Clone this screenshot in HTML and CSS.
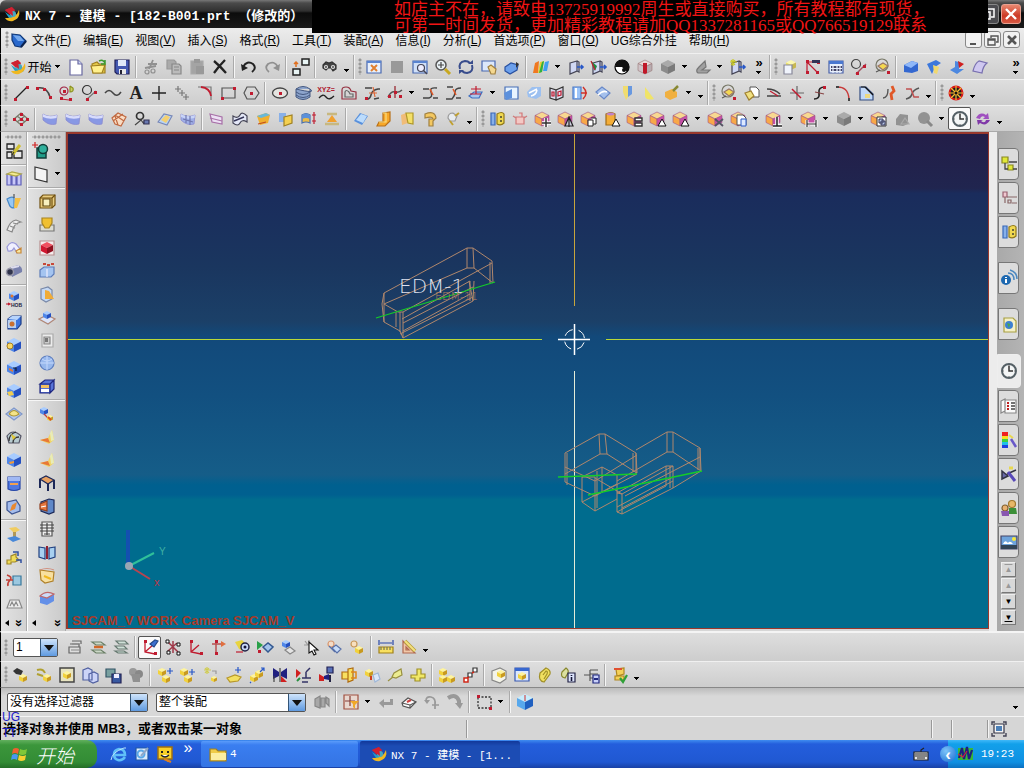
FILE: index.html
```html
<!DOCTYPE html>
<html lang="zh-CN">
<head>
  <meta charset="UTF-8">
  <title>NX 7 - 建模</title>
  <link rel="stylesheet" href="styles.css">
</head>
<body>
  <header class="titlebar">
    <span data-icon="nx"></span>
    <h1>NX 7 - 建模 - [182-B001.prt （修改的）</h1>
    <div class="window_btns">
      <button class="win_restore" aria-label="还原"><svg width="14" height="14" viewBox="0 0 14 14"><path d="M4 2h8v8H9M1 5h7v7H1z" fill="none" stroke="#fff" stroke-width="1.5"/></svg></button>
      <button class="win_close" aria-label="关闭"><svg width="14" height="14" viewBox="0 0 14 14"><path d="M2 2l10 10M12 2L2 12" stroke="#fff" stroke-width="2.4"/></svg></button>
    </div>
  </header>
  <div class="banner">
    <p>如店主不在，请致电13725919992周生或直接购买，所有教程都有现货，</p>
    <p>可第一时间发货，更加精彩教程请加QQ1337281165或QQ766519129联系</p>
  </div>

  <nav class="menubar">
    <i class="grip"></i>
    <span data-icon="part"></span>
    <button>文件(<u>F</u>)</button>
    <button>编辑(<u>E</u>)</button>
    <button>视图(<u>V</u>)</button>
    <button>插入(<u>S</u>)</button>
    <button>格式(<u>R</u>)</button>
    <button>工具(<u>T</u>)</button>
    <button>装配(<u>A</u>)</button>
    <button>信息(<u>I</u>)</button>
    <button>分析(<u>L</u>)</button>
    <button>首选项(<u>P</u>)</button>
    <button>窗口(<u>O</u>)</button>
    <button>UG综合外挂</button>
    <button>帮助(<u>H</u>)</button>
    <div class="doc_btns">
      <button aria-label="最小化"><svg width="12" height="12" viewBox="0 0 12 12"><path d="M2 10h6" stroke="#555" stroke-width="2"/></svg></button>
      <button aria-label="还原文档"><svg width="12" height="12" viewBox="0 0 12 12"><path d="M4 4V2h7v6H9M1 5h7v6H1zM1 6h7" fill="none" stroke="#555" stroke-width="1.4"/></svg></button>
      <button aria-label="关闭文档"><svg width="12" height="12" viewBox="0 0 12 12"><path d="M2 2l8 8M10 2l-8 8" stroke="#555" stroke-width="2.6"/></svg></button>
    </div>
  </nav>

  <div class="toolbar">
    <i class="grip"></i>
    <button class="start_menu"><span data-icon="nx"></span><span class="start_label">开始</span><i class="arrow"></i></button>
    <div class="tools" data-tools="new open save | cut copy paste del | undo redo | swap | find ov / fit gray zoombox zoom rotate pan persp | colors v wall wallgreen sphere redcube graycube v grayshape v wallstar"></div>
    <button class="more" aria-label="更多">»<i class="arrow"></i></button>
    <div class="tools" data-tools="/ boxdoc dims grid circline circgold | bluebox bluecone bluearm violet"></div>
    <button class="more last" aria-label="更多选项">»<i class="arrow"></i></button>
  </div>
  <div class="toolbar">
    <i class="grip"></i>
    <div class="tools" data-tools="line arc arccirc circtan curve text plus points fillet rect hexagon | ellipse helix xyz offset bridge project v join joint section v extract wrapc frame cylred sheet coneblue coneyel paint v ov / circgold docgold trim cross spline corner chamfer stretch smooth ov / wheel ov"></div>
  </div>
  <div class="toolbar">
    <i class="grip"></i>
    <div class="tools" data-tools="mesh | surf surf surf meshor circsurf surfyel surfgrid | surfpink wave boxor twobox flange ruled | slab bend fold hook knob ov / gauge robot cubeplus cubetree cubecopy cyltri cubelist cubetri cubetri v cubex cubepages v cubeperp v cubedim v graycube v cubegroup graytri grayzoom v clock! refresh ov"></div>
  </div>

  <main class="workspace">
    <aside class="dock">
      <i class="grip wide"></i>
      <div class="tools column" data-tools="sketch | extrude revolve sweep swept tube | hole boss pocket bosst padb emboss shell slot groove rib | tbolt steps hinge tray"></div>
      <div class="dock_more"><i class="left"></i><span>»</span></div>
    </aside>
    <aside class="dock second">
      <i class="grip wide"></i>
      <div class="tools column" data-tools="unite+v datum+v | frameor punch redbox split trimbody patch thick ball fillcube | instance wedge wedge table2 cabinet list book sack bluetop"></div>
      <div class="dock_more"><i class="left"></i><span>»</span></div>
    </aside>

    <section class="viewport">
      <svg class="scene" aria-label="图形窗口">
        <!-- full screen crosshair -->
        <path d="M0 205.5h474M538 205.5h2000" stroke="#b8d838"/>
        <path d="M506.500 0v172" stroke="#c8a53c"/>
        <path d="M506.500 237v600" stroke="#e4ecd8"/>
        <!-- EDM-1 block -->
        <g class="wire">
          <path d="M316 159L399 114h6l19 13 1 22-19-15h-7L316 170M399 114v20M405 114l1 20M316 159l-2 11 2 18 16 9M316 159v29M316 170l14 8h5L424 129M335 178v26M332 178v20M328 178v15M335 204l70-37 1-20M402 147v20M405 167l-4-20M335 197l67-37M332 200l73-37M334 185l68-38M335 189l70-36M422 128v21M332 197l3 7"/>
        </g>
        <path class="axis" d="M308 184L427 148"/>
        <text x="331" y="159" class="label">EDM-1</text>
        <text x="367" y="166" class="label small">EDM-11</text>
        <!-- lower pair -->
        <g class="wire">
          <path d="M497 319l34-19h6l31 19 1 20-30-19h-7l-35 20M531 300l1 20M537 300l2 20M497 319v29l30 14M499 319v32M568 319v21M565 319v19M497 333l30 14 42-26M527 362l42-22M514 343v25l13 9V343l-13 0 20-10 15 8v37l5 2 0-20-5-3-22-13M527 377l22-12M514 368l35-18M534 333v25M529 337v37M549 359l5 1 51-28h-7l-49 27M554 380l51-26v-22M549 378l49-26v-20M602 332v22M549 373l56-30M557 362l75-39M554 374l51-27M568 316l31-18h6l27 16 1 23-28-19h-6l-50 29M599 298v20M605 298v20M632 314v22M630 314v22M605 354l28-17"/>
        </g>
        <path class="axis" d="M490 343l79-3M520 361l114-24"/>
        <!-- pointer -->
        <g fill="none" stroke="#fff">
          <path d="M490 205.500h32M506.500 190v31" stroke-width="1.500"/>
          <circle cx="506.500" cy="205.500" r="10" stroke-dasharray="10 6" stroke-dashoffset="-3"/>
        </g>
        <!-- view triad -->
        <path d="M60 396v34" stroke="#1450b0" stroke-width="4"/>
        <path d="M61 432l25-13" stroke="#2fc09a" stroke-width="2"/>
        <path d="M61 432l21 13" stroke="#b84450" stroke-width="2"/>
        <circle cx="61" cy="432" r="4" fill="#9aa6b4"/>
        <text x="91" y="421" class="triad_y">Y</text>
        <text x="86" y="452" class="triad_x">x</text>
        <text x="4" y="491" class="camera">SJCAM_V WORK Camera SJCAM_V</text>
      </svg>
    </section>

    <aside class="resource">
      <button aria-label="装配导航器"><span data-icon="tree"></span></button>
      <button aria-label="约束导航器"><span data-icon="treepink"></span></button>
      <button aria-label="部件导航器"><span data-icon="gauge"></span></button>
      <button class="spaced" aria-label="信息"><span data-icon="info"></span></button>
      <button class="spaced" aria-label="浏览器"><span data-icon="webdoc"></span></button>
      <button class="spaced active" aria-label="历史记录"><span data-icon="clock"></span></button>
      <button aria-label="系统材料"><span data-icon="legend"></span></button>
      <button aria-label="可视化"><span data-icon="spectrum"></span></button>
      <button aria-label="工艺向导"><span data-icon="tools"></span></button>
      <button aria-label="角色"><span data-icon="people"></span></button>
      <button aria-label="场景"><span data-icon="scenepic"></span></button>
      <div class="scrolls">
        <button class="off" aria-label="顶部">▲</button>
        <button class="off" aria-label="向上">▲</button>
        <button aria-label="向下">▼</button>
        <button aria-label="底部">▼</button>
      </div>
    </aside>
  </main>

  <div class="toolbar tall">
    <i class="grip"></i>
    <span class="combo layer"><select aria-label="工作图层"><option>1</option></select></span>
    <div class="tools" data-tools="layers layersor layersgr | wcs! wcspts axes axesor wcseye playsq cubesq pointer chain chainyel | ruler protract ov"></div>
  </div>
  <div class="toolbar">
    <i class="grip"></i>
    <div class="tools" data-tools="findyel yelarrow yelframe assy assysave graysave | addcomp addcomp2 newcomp addlong movecomp mirror constrain savecomp clip pair hand yelplus | yelset links | boxlink boxwin paper paperinfo tree2 | update ov"></div>
  </div>
  <div class="toolbar selection">
    <span class="combo filter"><select aria-label="选择过滤器"><option>没有选择过滤器</option></select></span>
    <span class="combo scope"><select aria-label="选择范围"><option>整个装配</option></select></span>
    <div class="tools" data-tools="graysel | snap v grayback eraser grayundo grayredo | marquee v | glasscube"></div>
    <i class="arrow end"></i>
  </div>

  <footer class="status">
    <p class="cue">选择对象并使用 MB3，或者双击某一对象</p>
    <span class="ug">UG</span><span class="ug low">TT</span>
    <i class="cell message"></i><i class="cell"></i><i class="cell"></i>
    <div class="cell full"><span data-icon="fullscreen"></span></div>
  </footer>

  <nav class="taskbar">
    <button class="start"><span data-icon="windows"></span>开始</button>
    <div class="tools quick" data-tools="ie edit smiley"></div>
    <span class="chevron">»</span>
    <button class="task"><span data-icon="folder"></span>4</button>
    <button class="task current"><span data-icon="nx"></span>NX 7 - 建模 - [1...</button>
    <span class="keyboard" data-icon="keyboard"></span>
    <div class="tray">
      <button class="tray_btn" aria-label="显示隐藏图标">‹</button>
      <span data-icon="wavebox"></span>
      <time>19:23</time>
    </div>
  </nav>
  <script src="icons.js"></script>
</body>
</html>
```
FILE: styles.css
```css
* {
  box-sizing: border-box;
}
body {
  margin: 0;
  min-height: 100vh;
  display: flex;
  flex-direction: column;
  position: relative;
  background-color: #d6d6d6;
  color: #000;
  font-family: "Liberation Sans", "Noto Sans CJK SC", sans-serif;
  font-size: 12px;
  overflow: hidden;
}
button {
  font: inherit;
  color: inherit;
  background: none;
  border: 0;
  padding: 0;
  display: flex;
  align-items: center;
  justify-content: center;
}
p, h1 {
  margin: 0;
}
svg {
  display: block;
}

/* title */
.titlebar {
  height: 28px;
  display: flex;
  align-items: center;
  padding-left: 3px;
  background: linear-gradient(#777 0, #4a4a4a 3px, #303030 11px, #0c0c0c 13px, #1a1a1a 100%);
  border-radius: 6px 0 0 0;
}
.titlebar h1 {
  margin-left: 4px;
  color: #fff;
  font: bold 13px "Liberation Mono", "Noto Sans CJK SC", monospace;
  white-space: nowrap;
}
.window_btns {
  display: flex;
  gap: 2px;
  margin-left: auto;
  padding-right: 3px;
}
.window_btns button {
  width: 20px;
  height: 20px;
  border: 1px solid #888;
  border-radius: 3px;
  background: #4c4c50;
}
.window_btns .win_close {
  border-color: #e8a090;
  background: linear-gradient(#e88870, #cc3a26 60%, #d85a44);
}
.banner {
  position: absolute;
  top: 0;
  left: 312px;
  right: 36px;
  height: 33px;
  padding: 2px 0 0 82px;
  background: #000;
  color: #f01414;
  font: 17px/16px "Liberation Serif", "Noto Sans CJK SC", serif;
  white-space: nowrap;
}

/* menus */
.menubar {
  height: 25px;
  display: flex;
  align-items: center;
  padding: 0 4px 2px 3px;
  border-left: 1px solid #000;
  background: linear-gradient(#ececec, #dcdcdc);
}
.menubar > button {
  margin-left: 12px;
  white-space: nowrap;
}
.menubar > span + button {
  margin-left: 4px;
}
.doc_btns {
  display: flex;
  gap: 2px;
  margin-left: auto;
}
.doc_btns button {
  width: 17px;
  height: 17px;
  border: 1px solid #888;
  border-radius: 3px;
  background: #f2f2f2;
}

/* toolbars */
.toolbar {
  height: 26px;
  display: flex;
  align-items: center;
  padding-left: 2px;
  border-left: 1px solid #000;
  border-top: 1px solid #f0f0f0;
  background: linear-gradient(#dedede, #cdcdcd);
}
.toolbar.tall {
  height: 30px;
  border-top: 2px solid #f4f4f4;
}
.toolbar.selection {
  height: 29px;
  padding-left: 6px;
  border-top: 1px solid #888;
  background: linear-gradient(#bcbcbc, #d8d8d8 8px, #d8d8d8);
}
.grip {
  flex: none;
  width: 6px;
  height: 17px;
  background: radial-gradient(circle at 2px 2px, #999 1px, transparent 2px) 1px 0 / 4px 4px repeat-y;
}
.grip.wide {
  width: auto;
  height: 4px;
  margin: 3px 4px 0;
  background-repeat: repeat-x;
}
.tools {
  flex: none;
  display: flex;
  align-items: center;
}
.tool {
  flex: none;
  width: 23px;
  height: 23px;
}
.tool.pressed {
  border: 1px solid #555;
  border-radius: 2px;
  background: #fafafa;
}
.sep {
  flex: none;
  width: 6px;
  height: 22px;
  background: linear-gradient(90deg, transparent 2px, #aaa 2px, #aaa 3px, #f6f6f6 3px, #f6f6f6 4px, transparent 4px);
}
.break {
  flex: none;
  display: flex;
  align-items: center;
  width: 9px;
  height: 24px;
  padding-left: 3px;
  border-left: 1px solid #aaa;
  box-shadow: inset 1px 0 #f4f4f4;
}
.arrow {
  flex: none;
  width: 12px;
  height: 12px;
  background: linear-gradient(#000, #000) 3px 4px / 5px 1px no-repeat, linear-gradient(#000, #000) 4px 5px / 3px 1px no-repeat, linear-gradient(#000, #000) 5px 6px / 1px 1px no-repeat;
}
.arrow.low {
  margin-top: 8px;
}
.arrow.end {
  margin: 12px 2px 0 auto;
}
.start_menu .start_label {
  width: 25px;
}
.more {
  width: 20px;
  flex-direction: column;
  font: bold 13px/9px "Liberation Sans", sans-serif;
}
.more.last {
  width: 16px;
  margin-left: auto;
}
.more .arrow {
  height: 9px;
}

/* combo boxes */
.combo {
  position: relative;
  flex: none;
}
.combo select {
  display: block;
  width: 100%;
  height: 19px;
  padding: 0 2px;
  appearance: none;
  border: 1px solid #555;
  border-radius: 2px;
  background: #fff;
  color: #000;
  font: 12px "Liberation Sans", "Noto Sans CJK SC", sans-serif;
}
.combo::after {
  content: "";
  position: absolute;
  top: 1px;
  right: 1px;
  width: 16px;
  height: 17px;
  border-left: 1px solid #357;
  background: linear-gradient(#cfe4fb, #5f9ae0);
  pointer-events: none;
}
.combo::before {
  content: "";
  position: absolute;
  z-index: 1;
  top: 7px;
  right: 4px;
  border: 5px solid transparent;
  border-top: 6px solid #111;
  border-bottom: 0;
  pointer-events: none;
}
.layer {
  width: 45px;
  margin: 0 5px 0 4px;
}
.filter {
  width: 141px;
}
.scope {
  width: 150px;
  margin: 0 4px 0 8px;
}

/* work area */
.workspace {
  flex: 1;
  display: flex;
  border-left: 1px solid #000;
  border-top: 1px solid #aaa;
}
.dock {
  width: 26px;
  flex: none;
  display: flex;
  flex-direction: column;
  border-right: 1px solid #aaa;
  background: linear-gradient(90deg, #e2e2e2, #d2d2d2);
}
.dock.second {
  width: 39px;
  border-left: 1px solid #fff;
  background: linear-gradient(90deg, #e2e2e2, #cacaca);
}
.column {
  flex-direction: column;
}
.column .sep {
  width: 100%;
  height: 5px;
  background: linear-gradient(transparent 2px, #aaa 2px, #aaa 3px, #f6f6f6 3px, #f6f6f6 4px, transparent 4px);
}
.column .pair {
  display: flex;
  align-items: center;
}
.dock_more {
  display: flex;
  align-items: center;
  justify-content: space-between;
  margin-top: auto;
  padding: 0 4px 2px;
  height: 15px;
}
.dock_more .left {
  border: 3px solid transparent;
  border-right: 4px solid #000;
  border-left: 0;
}
.dock_more span {
  font: bold 13px/10px "Liberation Sans", sans-serif;
  transform: rotate(90deg);
}
.viewport {
  flex: 1;
  min-width: 0;
  position: relative;
  margin-bottom: 2px;
  border: 2px solid #98382c;
  border-width: 2px 1px 1px 2px;
  background: linear-gradient(#231e48 0, #20254f 11%, #1a2c5c 12%, #1a365f 27%, #1b4068 38%, #12497a 41%, #125080 53%, #155d88 69%, #00608f 71%, #006090 73%, #006c8e 74%, #006c8e 100%);
}
.scene {
  position: absolute;
  inset: 0;
  width: 100%;
  height: 100%;
}
.wire {
  fill: none;
  stroke: #b0876c;
}
.axis {
  stroke: #14cc28;
  stroke-width: 1.3;
}
.label {
  font: 200 20px "DejaVu Sans", sans-serif;
  fill: #dfe2f0;
}
.label.small {
  font-size: 11px;
  fill: #b8805c;
}
.triad_y {
  font-size: 10px;
  fill: #3fb0a4;
}
.triad_x {
  font-size: 11px;
  fill: #b83848;
}
.camera {
  font: bold 13px "Liberation Sans", sans-serif;
  fill: #a83a28;
}

/* resource bar */
.resource {
  width: 35px;
  flex: none;
  display: flex;
  flex-direction: column;
  gap: 2px;
  padding: 16px 5px 0 9px;
  background: linear-gradient(90deg, #ececec 8px, #a9a9a9 8px, #b4b4b4);
}
.resource > button {
  height: 32px;
  border: 1px solid #777;
  border-radius: 0 4px 4px 0;
  background: #dcdcdc;
}
.resource > .spaced {
  margin-top: 12px;
}
.resource > .active {
  margin-left: -1px;
  margin-right: -2px;
  height: 34px;
  border-color: #eee;
  background: #ececec;
}
.scrolls {
  display: flex;
  flex-direction: column;
  align-items: center;
  gap: 1px;
  margin-top: 2px;
}
.scrolls button {
  width: 15px;
  height: 15px;
  border: 1px solid #eee;
  border-right-color: #777;
  border-bottom-color: #777;
  background: #d8d8d8;
  font-size: 8px;
}
.scrolls .off {
  color: #999;
}
.scrolls button:first-child {
  text-decoration: overline;
}
.scrolls button:last-child {
  text-decoration: underline;
}

/* status line */
.status {
  position: relative;
  height: 24px;
  display: flex;
  align-items: center;
  padding-left: 2px;
  border-left: 1px solid #000;
  border-top: 1px solid #f4f4f4;
  background: #d6d6d6;
}
.cue {
  width: 463px;
  font-size: 13px;
  line-height: 16px;
  font-weight: bold;
}
.ug {
  position: absolute;
  top: -7px;
  left: 1px;
  color: #2020c8;
}
.ug.low {
  top: 9px;
}
.cell {
  width: 20px;
  height: 18px;
  border-left: 1px solid #999;
  box-shadow: inset 1px 0 #f4f4f4;
}
.cell.message {
  flex: 1;
}
.cell + .cell + .cell {
  width: 36px;
}
.status .cell.full {
  display: flex;
  align-items: center;
  justify-content: center;
  width: 22px;
  margin-right: 15px;
}

/* taskbar */
.taskbar {
  height: 28px;
  display: flex;
  align-items: center;
  background: linear-gradient(#3f8cf0 0, #245edc 4px, #2058d2 22px, #1941a5);
  color: #fff;
}
.start {
  width: 97px;
  height: 28px;
  gap: 7px;
  padding-right: 12px;
  border-radius: 0 10px 10px 0;
  background: linear-gradient(#62b05e, #3b963b 5px, #338c35 22px, #246e27);
  font: italic 300 19px "Noto Sans CJK SC", sans-serif;
}
.quick {
  margin-left: 10px;
}
.chevron {
  width: 24px;
  text-align: center;
  font-size: 16px;
  margin: -12px 1px 0 0;
}
.task {
  width: 157px;
  height: 26px;
  flex: 0 1 auto;
  justify-content: flex-start;
  gap: 3px;
  padding-left: 8px;
  border-radius: 2px;
  background: linear-gradient(#5a9cfa, #3a7ef0 4px, #3474e4);
  font: 11px "Liberation Mono", "Noto Sans CJK SC", monospace;
}
.task.current {
  width: 160px;
  margin-left: 2px;
  padding-left: 10px;
  background: linear-gradient(#12389a, #1c4cb4 5px, #1c4cb4);
}
.keyboard {
  margin-left: auto;
}
.tray {
  display: flex;
  align-items: center;
  width: 76px;
  height: 28px;
  margin-left: 18px;
  background: linear-gradient(#40b8f8, #12a0ea 4px, #1090e2 22px, #0c70c0);
  font: 11px "Liberation Mono", monospace;
}
.tray_btn {
  flex: none;
  width: 16px;
  height: 16px;
  margin-left: -8px;
  border-radius: 50%;
  background: radial-gradient(circle at 6px 5px, #7cc4fa, #1a6cd0);
  font: bold 17px/13px "Liberation Sans", sans-serif;
}
.tray time {
  margin-left: 7px;
}
```
FILE: icons.js
```javascript
// small drawing helpers, every icon is on an 18 x 18 grid
function p(d, stroke, fill, w) {
  return `<path d="${d}" stroke="${stroke || 'none'}" fill="${fill || 'none'}" stroke-width="${w || 1.2}"/>`;
}
function c(x, y, r, stroke, fill, w) {
  return `<circle cx="${x}" cy="${y}" r="${r}" stroke="${stroke || 'none'}" fill="${fill || 'none'}" stroke-width="${w || 1.2}"/>`;
}
function cube(x, y, s, top, left, right, edge) {
  let h = s / 2;
  return p(`M${x} ${y - s}l${s} ${h}-${s} ${h}-${s}-${h}z`, edge, top, .6) +
    p(`M${x - s} ${y - h}l${s} ${h}v${s}l-${s}-${h}z`, edge, left, .6) +
    p(`M${x + s} ${y - h}l-${s} ${h}v${s}l${s}-${h}z`, edge, right, .6);
}
const K = '#222', R = '#c01c30', B = '#2858c8', Y = '#f0c838', G = '#909090';
const blue = (x = 9, y = 9, s = 7) => cube(x, y, s, '#a8ccff', '#4f86e8', '#2450c0');
const gold = (x = 9, y = 9, s = 5) => cube(x, y, s, '#fff49c', '#f2d23c', '#c89a20');
const hot = cube(8, 9, 7, '#f8d890', '#f8a848', '#c850a8', '#a05088');
const gray = cube(9, 9, 7, '#aaa', '#8c8c8c', '#7a7a7a');
const dots = (list) => list.map(([x, y]) => `<rect x="${x - 1}" y="${y - 1}" width="3" height="3" fill="${R}"/>`).join('');
const sheet = (top, low) => p('M2 4q6 4 14 1l-1 9q-7 2-13-4z', '#8a8ad0', low, .8) + p('M2 4q6 4 14 1l-.5 3Q8 10 2 7z', '', top);
const page = (x, y) => p(`M${x} ${y}h6l3 3v7h-9z`, '#555', '#fff', 1);
const wall = p('M3 5l7-2v10l-7 3zM10 3l2 1v10l-2-1', '#445', '#d0d8f4') + p('M10 9h6m-2-2l2 2-2 2', B, '', 1.6);
const bin = p('M2 7l3-3 3 1 3-1 4 3v4l-3 2-2-3H7l-2 2-3-2z', '#333', '#444') + c(5, 9, 1.500, '#ddd') + c(12, 9, 1.500, '#ddd');
const tinyTri = p('M9 16l4-7 4 7z', '#111', '#fff', 1);
const ax = p('M4 3v11l10 2M4 14l8-7', R, '', 1.300) + dots([[4, 3], [14, 15]]);

const icons = {
  nx: p('M2 5l7-3 3 3-3 7z', '', '#d02030') + p('M2 7l6 9 7-3-3-6-4 4z', '', '#1e9ec8') + p('M5 13q8 0 11-8 2 8-6 11-5 1-8-3', '', '#f0b820') + c(10, 9, 3, '', '#48a8c0') + p('M2 5l7-3 1 9z', '', '#d02030'),
  part: p('M2 3l8 1 6 6-5 6-6-1-3-6z', '#103878', '#2868cc') + p('M3 4l7 1 4 5-6 0z', '', '#74a8ec') + p('M11 16l5-6', '#0c2450', '', 2),
  new: p('M3 2h8l4 4v11H3z', '#6868a0', '#fff') + p('M11 2v4h4', '#6868a0', '#d0d8f8'),
  open: p('M2 6l5-2 2 2h6v9H3z', '#a08020', '#e4c848') + p('M1 8l14-1-3 8H3z', '#a08020', '#fff08c') + p('M9 3q4-2 6 2m0-3v4h-4', '#3c9a30', '', 1.5),
  save: p('M2 2h14v14H4l-2-2z', '#202058', '#4458b0') + p('M5 2h8v6H5z', '', '#e0e8f8') + p('M6 11h7v5H6z', '', '#e8e8e8') + p('M7 12h2v4H7z', '', '#223'),
  cut: p('M11 2l-4 9M6 6h9M3 10l11-2', G, '', 1.800) + c(5, 14, 2, G) + c(11, 13, 2, G),
  copy: p('M2 2h7l2 2v7H2z', '#999', '#aaa') + p('M7 6h7l2 2v8H7z', '#888', '#bbb') + p('M9 9h5M9 12h5', '#888'),
  paste: p('M3 3h12v13H3z', '#aaa', '#a4a4a4') + p('M6 1h6v4H6zM8 8h8v8H8z', '', '#999'),
  del: p('M3 3q6 5 12 12M14 2Q8 8 3 15', K, '', 2.300),
  undo: p('M3 9q4-7 10-3 4 4-1 8', K, '', 2) + p('M1 6l1 7 6-3z', '', K),
  redo: p('M15 9q-4-7-10-3-4 4 1 8', G, '', 1.800) + p('M17 6l-1 7-6-3z', '', G),
  swap: p('M10 1h7v6h-7zM1 11h7v6H1z', K, '#e8f4f4', 1.500) + p('M4 9V4m-2 2l2-2 2 2', '#e07020', '', 1.500),
  find: bin,
  fit: p('M2 3h14v12H2z', '#4868b0', '#e8f0fc') + p('M2 3h14v2H2z', '', '#5a84d0') + p('M6 7l6 6m0-6l-6 6', '#e08030', '', 2),
  gray: p('M3 3h12v12H3z', '', '#999'),
  zoombox: p('M2 3h14v12H2z', '#4868b0', '#d0e0f8') + p('M2 3h14v2H2z', '', '#5a84d0') + c(10, 10, 3.500, '#445', '#eef') + p('M12 12l4 4', '#445', '', 1.500),
  zoom: c(7, 7, 5, '#555', '#e8f0f4', 1.500) + p('M4 7h6M7 4v6', '#444') + p('M11 11l5 5', '#c8a820', '', 3),
  rotate: p('M3 11Q1 4 8 3q3 0 5 2M15 7q2 7-5 8-3 0-5-2', '#384c8c', '', 2) + p('M11 6h5V2zM7 12H2v4z', '', '#384c8c'),
  pan: p('M2 3h13v10H2z', '#4868b0', '#dce8fa') + p('M8 9l3-2 5 4-1 5h-4z', '#a08040', '#f4d890'),
  persp: p('M2 9l6-4 7 2-1 5-7 4-5-3z', '#2850a0', '#6ca0ec') + p('M13 4l3 2-3 4z', '', '#333'),
  colors: p('M1 15L3 5l4-2-1 12z', '', '#f07820') + p('M6 15L8 4l4-1-2 11z', '', '#e8d030') + p('M7 15L10 4l2-1-2 11z', '', '#30b040') + p('M11 13l2-9 4-1-2 10z', '', '#40a0f0'),
  wall: wall,
  wallgreen: wall + p('M1 3l6 5-2 5z', '', '#208c40') + p('M1 3l4 9', R),
  sphere: c(9, 9, 7, '#000', '#fff') + p('M9 2a7 7 0 0 1 5 12L9 9H2a7 7 0 0 1 7-7z', '', '#111') + c(11, 12, 2, '', '#111'),
  redcube: cube(9, 9, 7, '#e8d8d8', '#d0c4c8', '#b8acb0', '#977') + p('M7 5h4v10l-2 1-2-1z', '', '#c01828'),
  graycube: gray,
  grayshape: p('M5 9l6-6 1 6-4 3 8 0-3 3H4q-3-2 1-6z', '#777', '#a0a0a0'),
  wallstar: wall + p('M4 1v7M1 4h7M2 2l4 5M6 2L2 7', '#c8c820', '', 1.200),
  boxdoc: cube(10, 7, 5, '#fcf8b0', '#f0e468', '#c8b850') + p('M3 7h8v9H3z', '#889', '#f0f4fc'),
  dims: p('M3 3v12M3 4h11M3 4l10 10', R) + dots([[3, 3], [14, 4], [3, 14], [13, 14]]) + p('M8 2h8v3H8z', '', '#335'),
  grid: p('M2 3h14v12H2z', '#4860a8', '#e8f0fc') + p('M2 3h14v3H2z', '', '#4a78d0') + p('M4 9h11M4 12h11', '#446', '', 1.8) + p('M6 7v8M10 7v8M13 7v8', '#e8f0fc'),
  circline: c(6, 6, 4.500, '#444') + p('M6 16L16 6', '#a05060', '', 1.5) + dots([[7, 15], [14, 8]]),
  circgold: c(9, 7, 6, '#776') + p('M5 8l5-3 5 3-5 4z', '#976', '#f4d850') + p('M3 14l4-2', '#555') + dots([[15, 14]]),
  bluebox: p('M2 7l8-4 6 2v8l-6 2-8-1z', '', '#3468d0') + p('M2 7l8-4 6 2-7 5z', '', '#90b8f8'),
  bluecone: p('M2 6l9-4 5 3-6 4-3 7z', '', '#3c78dc') + p('M8 7l6 2-2 7-3-1z', '', '#f0d870'),
  bluearm: p('M2 12l5-3V3l4 1v7l5 0-7 5z', '', '#4c88e0') + p('M10 3l6 3-5 4z', '', '#d02020'),
  violet: p('M2 13q2-8 6-10l8 2q-4 3-5 10z', '#7870b0', '#cfc8f0'),
  line: p('M3 15L15 3', K) + dots([[3, 15], [15, 3]]),
  arc: p('M2 4q10-2 13 9', '#444', '', 1.500) + dots([[2, 4], [9, 5], [15, 13]]),
  arccirc: c(6, 7, 4, '#a02040') + p('M3 15l8 1', R) + p('M12 2v6q4 0 3-4l-3-2', '#8a9020', '#c8d060') + dots([[6, 7], [3, 14], [12, 15]]),
  circtan: c(6, 6, 4.500, '#333') + p('M5 16l10-9', '#777') + dots([[6, 15], [14, 8]]),
  curve: p('M1 9q4-5 8 0t8-1', '#444', '', 1.500),
  text: '<text x="9" y="15" text-anchor="middle" font-family="Liberation Serif, serif" font-weight="bold" font-size="18" fill="#222">A</text>',
  plus: p('M9 2v14M2 9h14', K, '', 1.400),
  points: p('M5 2v6M2 5h6M9 6v6M6 9h6M13 10v6M10 13h6', '#777'),
  fillet: p('M2 3h13v13', '#777') + p('M5 3q9 1 10 9', R, '', 1.8),
  rect: p('M3 4h13v10H3z', '#555') + dots([[3, 14], [15, 4]]),
  hexagon: p('M5 3h8l4 6-4 6H5L2 9z', '#555') + dots([[9, 9]]),
  ellipse: '<ellipse cx="9" cy="9" rx="7.500" ry="5" fill="#e4e4e0" stroke="#444" stroke-width="1.300"/>' + dots([[9, 9]]),
  helix: p('M2 5q7-5 14 0t-14 0v8q7 5 14 0V5M2 8q7 5 14 0M2 11q7 5 14 0', '#445880', '#8ca4cc', 1),
  xyz: '<text x="9" y="8" text-anchor="middle" font-family="Liberation Sans, sans-serif" font-weight="bold" font-size="7" fill="#b02030">XYZ=</text>' + p('M2 14q4-5 7-1t8-1', K, '', 1.300),
  offset: p('M2 15V6q0-3 4-3 4 0 5 4l5 1v7z', '#943040') + p('M5 13V8q1-3 4 0l1 2h3v3z', '#666'),
  bridge: p('M2 4h7M2 15q5 1 6-4t7-6h2M11 15l5-1', '#444', '', 1.500) + p('M10 3l2 10M6 9h8', '#e06838', '', 1.200) + dots([[3, 14]]),
  project: p('M2 13q3-6 7-5t7-2', '#555', '', 1.500) + p('M9 2v12', '#a04048', '', 1.500) + dots([[3, 12], [14, 12], [9, 8]]),
  join: p('M2 5h6M2 14h6q4-1 2-6t6-4M12 14h5', '#444', '', 1.400) + p('M9 5l3 6', '#e05828', '', 1.5),
  joint: p('M3 3h6M2 15h6q3-3 3-7t6-4M12 14h5', '#444', '', 1.400) + p('M9 5l3 6', '#e05828', '', 1.5),
  section: p('M2 12l5-4h8l-3 6H5z', '#4070c0', '#a8c8f0') + p('M4 5h10M9 2v8M3 10h11', R),
  extract: p('M3 3h13v12H3z', '#4870b8', '#e8f4ff') + p('M2 9l8-4v9l-6 2z', '', '#5c90dc'),
  wrapc: p('M2 8l5-5h9v9l-5 3-8-2z', '', '#9cc0f0') + p('M4 9l8-4M6 12q5-1 6-6', '#fff', '', 1.500),
  frame: p('M2 4l6 2v10l-6-2zM8 6l7-3v10l-7 3z', '#333', '#dde') + p('M4 8h2v4H4zM10 8l3-1v4l-3 1z', R),
  cylred: p('M2 3h8v12H2z', '#4878c8', '#9cc4f8') + p('M5 4v10', '#fff', '', 2) + p('M12 3q6 6 0 12M10 9h6', '#d03028', '', 1.5),
  sheet: p('M2 8l6-5 8 6-6 6z', '#6888c8', '#a4c0ec') + p('M4 11q5-5 9-3', '#fff', '', 1.600),
  coneblue: p('M6 2h6l1 8-4 6-3-8z', '', '#f0dc70') + p('M11 2h4v8l-4 3z', '', '#6898e0'),
  coneyel: p('M5 3l9 12q-8 2-9-3z', '', '#f0e468'),
  paint: p('M2 8l7-3 5 3v5l-7 3-5-3z', '', '#f0b040') + p('M10 7l5-5', '#883', '', 2.500),
  docgold: page(8, 3) + p('M3 9l6-2 3 5-5 4z', '#a08030', '#f0e080'),
  trim: p('M2 5q8 0 13 5M2 12h14', '#444', '', 1.400) + p('M5 7l8 5', R),
  cross: p('M2 9h14M9 2v14', '#666') + p('M4 5l9 9', R, '', 1.500),
  spline: p('M3 15q6 0 5-6t6-6', K, '', 1.700) + p('M4 8l9 2', '#844') + dots([[13, 3]]),
  corner: p('M2 3q12-1 13 12', '#c83838', '', 1.400) + p('M2 3h3M15 14v3', '#444', '', 2),
  chamfer: p('M3 3h6l7 7v6H3z', '#334c80', '#c0d8f8') + p('M4 3h4l8 8', '#111') + p('M8 10h5v4H8z', '', '#ecd880'),
  stretch: p('M3 14q5 0 5-9', '#555', '', 1.400) + p('M12 2l2 5-3 3 1 6', '#e05828', '', 2.800),
  smooth: p('M3 15q5-1 6-5t7-6', '#555', '', 1.600) + p('M3 5h5l3 8h5', '#c05050', '', 1.500),
  wheel: c(9, 9, 7.500, '', '#d81818') + c(9, 9, 4, '#1c1c20', '#d81818', 3) + p('M9 2v14M2 9h14M4 4l10 10M14 4L4 14', '#f0c030', '', 1.200) + c(9, 9, 1.500, '', '#111'),
  mesh: p('M2 9l7-6 7 6-7 6zM5 6l8 6M13 6l-8 6', '#776') + dots([[2, 9], [9, 4], [15, 9], [9, 14], [9, 9]]),
  surf: sheet('#d8dcfc', '#8898e4'),
  meshor: p('M2 8l6-5 8 4-5 9-6-2zM5 5l9 6M3 11l10-7M8 15L5 6', '#c06840', '#f8dcc4'),
  circsurf: c(7, 6, 3.500, '#333', '', 1.700) + p('M2 15l6-5 3 4M10 12h6', '#444') + p('M11 10h5v4h-5z', '#335', '#6878b0'),
  surfyel: p('M2 12l6-8 8 2-5 9z', '#7888b8', '#b8d4f4') + p('M5 10l5-5 4 2-4 6z', '', '#f4d070'),
  surfgrid: sheet('#c8d4f8', '#a0b0e8') + p('M4 9l10 3M7 5v8M11 6v9', '#7078b0'),
  surfpink: p('M2 4l12 3v7L4 12z', '#a870a8', '#ece0f4') + p('M2 8l12 3', '#a870a8'),
  wave: p('M2 6q5 3 7-1t7 1v6q-5-3-7 1t-7 0z', '#445', '#e4e8f8') + p('M3 11l10-4', '#335', '', 1.500),
  boxor: p('M3 6l9-3 4 2-2 8-8 2z', '', '#f0b030') + p('M3 6l9-3 4 2-9 3z', '', '#68b8d8') + p('M4 14l8-2', '#c04c20'),
  twobox: p('M2 3h7v9H2z', '', '#88b0e8') + p('M7 7l8-2v8l-8 3z', '#a08020', '#f4d050'),
  flange: p('M2 5q4-3 8 0v8q-4-2-8 0z', '#4870b0', '#ecbc48') + p('M2 5q4-3 8 0v4q-4-2-8 0z', '', '#5c90d8') + p('M14 2v12m-2-9h4m-4 6h4', R),
  ruled: p('M4 4h10M2 14h14', '#c8b880', '', 2.500) + p('M9 5l5 7H4z', '', '#f0a030'),
  slab: p('M2 11l6-8 8 3-6 9z', '', '#5890dc') + p('M4 10l5-6 6 2-4 7z', '', '#bcdcfc'),
  bend: p('M8 3l7-1v9l-5 5H2l2-4h4z', '#b87018', '#f8a828') + p('M8 3l3 0v9H4', '#f8dc80'),
  fold: p('M3 5l5-2 2 10-6 2z', '', '#f0bc78') + p('M8 3h7v11l-5-1z', '#b09828', '#f4e068'),
  hook: p('M4 4q10-4 11 4l-3 3v5H8V9h4q0-3-8-1z', '#a08040', '#f4c860'),
  knob: p('M4 8q0-5 5-5l4 3-2 5H6z', '#999', '#e8ecf0') + p('M6 11l3 4M11 6l4-3', '#c0a030', '', 2),
  gauge: p('M3 3h4v12H3z', '#3868b8', '#88b0e8') + p('M9 4q5-3 7 0v9q-3 3-7 1z', '#907818', '#f0d850') + c(13, 7, 1, '', '#443') + c(13, 11, 1, '', '#443'),
  robot: p('M5 7h8v7H5zM2 6l3 2M16 6l-3 2M8 3h3v4', '#d07878', '#f4c8c4'),
  cubeplus: hot + p('M12 8v9M8 13h9', '#fff', '', 3.500) + p('M12 8v9M8 13h9', '#333', '', 1.500),
  cubetree: hot + p('M12 7l-4 9h8zM12 8v9', '#222', '#ccd'),
  cubecopy: hot + p('M8 10h5v6H8zM11 8h5v6h-3', '#222', '#fff', 1),
  cyltri: p('M3 4q5-3 9 0v11H3z', '#a06c18', '#f4ae38') + p('M3 4q5-3 9 0-4 3-9 0', '', '#c080c8') + tinyTri,
  cubelist: hot + p('M9 8h7v3H9zM9 13h7v3H9z', '#333', '#fff', 1.400),
  cubetri: hot + tinyTri,
  cubex: hot + p('M8 9l8 7M16 9l-8 7', '#556', '', 1.800),
  cubepages: hot + page(7, 5) + p('M11 9h5v7h-5z', B, '#dce8ff', 1),
  cubeperp: hot + p('M12 7v9M8 16h9', '#fff', '', 3.500) + p('M12 7v9M8 16h9', '#222', '', 1.500),
  cubedim: hot + p('M7 10v7M16 10v7M7 14h9', '#fff', '', 3) + p('M7 10v7M16 10v7M7 14h9', '#333', '', 1.200),
  cubegroup: hot + p('M7 7h9v9H7z', '#333', '#fff', 1) + p('M9 9h4v4H9zM11 11h4v4h-4z', '#335', '#b8c8e8', 1),
  graytri: p('M3 9l4-5 8 1v9l-5 2-7-1z', '', '#929292') + p('M8 14l4-6 4 6z', '#aaa'),
  grayzoom: c(8, 8, 6, '', '#929292') + p('M11 11l5 5', '#888', '', 3),
  clock: c(9, 9, 7, '#556066', '#f4f6f6', 2) + p('M9 4v5h4', '#333', '', 1.500) + p('M9 3v1M9 14v1M3 9h1M14 9h1', '#777'),
  refresh: p('M2 8q4-7 10-3l2-2 1 6-6 0 2-2q-4-2-5 2z', '', '#a050c0') + p('M16 10q-4 7-10 3l-2 2-1-5h6l-2 1q4 3 5-1z', '', '#8038a8'),
  sketch: p('M2 2h7v5H2zM2 10h5v6H2zM9 9h8v7H9z', K, '#e8e8e8', 1.300) + p('M8 12l7-9', '#d0c030', '', 3) + p('M7 13l2-3', '#333'),
  extrude: p('M2 4h4v11H2zM7 5h4v10H7zM12 4h4v11h-4z', '#6060b8', '#c8c8f8') + p('M2 4l5-2 9 2-5 2z', '#b0a848', '#f4ec90'),
  revolve: p('M2 6q5-3 7-1v10q-4 0-5-4z', '#4888c8', '#98c8f4') + p('M10 5h6l-4 10h-3z', '', '#f4c048') + p('M9 1v4', '#555'),
  sweep: p('M2 14q3-9 9-10l5 2q-7 1-9 10zM5 10l5 2M8 7l5 1', '#888', '#eee'),
  swept: p('M2 8q4-7 9-3l4 5-3 4-3-5q-2 4-6 3z', '#9898d8', '#f0f0ff') + p('M11 12l5-3v5h-4z', '#c88838', '#f8e8a0'),
  tube: p('M4 6l9-3q5 2 4 7l-10 5z', '', '#7880ac') + p('M6 6l8-2', '#dde', '', 2) + c(5, 10, 3.500, '#99a', '#30344c', 1.5),
  hole: blue(9, 6, 5) + c(7, 6, 1.500, '', '#e07830') + p('M1 14h4m-2-1l2 1-2 1', R) + '<text x="6" y="17" font-family="Liberation Sans, sans-serif" font-weight="bold" font-size="5" fill="#224">HOB</text>',
  boss: p('M3 6l4-3h9v8l-4 5H3z', '#1c3c88', '#3c74dc') + p('M3 6l4-3h9l-4 4z', '', '#b8d4fc') + p('M3 7h8v8H3z', '', '#b8d0f0') + c(7, 11, 2.500, '', '#c87030'),
  pocket: blue() + c(5, 10, 3, '#a88020', '#f8d868', 1),
  bosst: blue() + p('M4 9l4 2v2L4 11z', '', '#e07838') + p('M8 9h3v3', '#123'),
  padb: blue() + p('M2 10l5-1 2 4-5 1z', '', '#f0cc50'),
  emboss: p('M1 9l8-6 8 6-8 6z', '#8098c8', '#b4c8f0') + p('M4 9q5-7 10 0-5 4-10 0', '#b09838', '#f4e488'),
  shell: p('M2 8q6-8 14 0l-2 7H4z', '#556', '#b8ccd0') + p('M4 13q0-7 7-9M8 15q0-6 6-6', '#333', '', 1.300) + p('M6 6l5 3-3 3z', '', '#e0c838'),
  slot: blue() + p('M4 11l5-1v2l-4 1z', '', '#f09838'),
  groove: p('M3 3h12v12q-6 3-12 0z', '#2848a8', '#5078e0') + p('M3 3h12v4H3z', '', '#a0b8f4') + p('M5 10h8', '#f0a050', '', 2),
  rib: p('M2 5l9-2 4 6v5l-8 3-5-4z', '#3c5490', '#a4bcec') + p('M5 14l2-6 5-3-2 7z', '', '#e88830'),
  tbolt: p('M4 3l7-1 4 3-6 3z', '', '#f0cc60') + p('M8 7h3v5H8z', '', '#b09858') + p('M2 13l8-2 6 3-8 3z', '', '#4888d8'),
  steps: p('M2 16v-4h4V8l5-2v3l3 3-4 2H6v2z', '#a08828', '#f0dc58') + p('M8 4h5v4M11 12h5v3', '#3050a0', '', 1.500),
  hinge: p('M8 5h8v9H8z', '#38789c', '#9cc8e0') + p('M2 4q6 2 3 5t-2 6M1 9h7', '#c04038', '', 1.600),
  tray: p('M2 14l3-8h9l3 8zM5 12l2-4 2 4 2-4 2 4', '#888', '#ececec'),
  unite: p('M5 6h9v10H5z', '#123c38', '#209c88', 1.500) + c(11, 7, 4.500, '#123c38', '#30b09c', 1.500) + p('M3 0v6M0 3h6', '#d02020'),
  datum: p('M3 2l12 3v12L3 14z', '#333', '#f4f4f4'),
  frameor: p('M2 5l3-3h12v10l-3 3H2z', '#705010', '#e8cc80') + p('M5 6h7v7H5z', '#604810', '#f8f0c0') + p('M2 5h12v10M14 5l3-3', '#705010'),
  punch: p('M2 9h14v6H2z', '#777', '#dcdcd0') + p('M4 2h10v5l-3 5H7L4 7z', '#a88420', '#f0c030'),
  redbox: p('M2 2h14v14H2z', '#b89090', '#f4ecec') + cube(9, 9, 6, '#f05060', '#d01830', '#901020'),
  split: p('M2 8l4-3h10v7l-3 3H2z', '#5c7cb8', '#a4c4f0') + p('M9 7v8', '#eef') + p('M5 2h3M9 3h3M13 2h3', '#c84838', '', 2),
  trimbody: p('M3 4l7-2 4 3v9l-6 3-5-3z', '#7888a8', '#c4d8f4') + p('M7 5l4 1 5 8-9 0z', '', '#f0ac38'),
  patch: p('M1 11l8-4 8 4-7 5z', '#b08878', '#dce4f8') + blue(9, 7, 4),
  thick: p('M4 3h11v13H4z', '#aaa', '#ececec') + p('M6 6h6v7H6z', '#888', '#ccc') + p('M7 7h3v4H7z', '', '#777'),
  ball: c(9, 9, 7, '#6080c0', '#98b8ec') + p('M2 9h14M9 2v14M4 5q5 4 10 0', '#c4d8fc', '', 1),
  fillcube: p('M2 7l5-4h9l-4 4zM2 7h10v9H2zM12 7l4-4v9l-4 4z', '#202880', '#5874d8') + p('M3 8h8v3H3z', '', '#f4c060') + p('M3 12h8v3H3z', '', '#fff'),
  instance: blue(6, 6, 4) + p('M6 9l6 6', '#c04040') + gold(12, 13, 3) + p('M10 12l3 3', '#e05020', '', 2),
  wedge: p('M2 12l8-2 4-8 2 10-5 4z', '', '#f0d468') + p('M2 12l8-2 2 5z', '', '#e87838') + p('M12 5l2-3 2 10-3 1z', '', '#e8ecb8'),
  table2: p('M2 5l6-3 8 4-6 4z', '#1c2858', '#e8a060') + p('M2 5v9M10 10v7M16 6v9', '#1c2858', '', 2),
  cabinet: p('M3 5l8-3 5 1v12l-5 2-8-3z', '#1c2858', '#6088c8') + p('M2 7l7-3v10l-7-2z', '#904020', '#e87840') + p('M3 10l5-1', '#fff'),
  list: p('M4 2h10v14H4z', '#555', '#f0f0f0') + p('M2 5h14M2 8h14M2 11h14M6 14h6M9 3v12', '#444', '', 1.200),
  book: p('M1 4l6 1v11l-6-2zM17 4l-6 1v11l6-2z', '#204080', '#a8d0f0') + p('M9 3v13', '#902030', '', 2),
  sack: p('M2 4l14 2-1 9-8 2-4-3z', '#b08028', '#f8e0a0') + p('M2 4q7-3 14 0', '#d09080') + p('M6 10l7 3', '#f0b820', '', 2),
  bluetop: p('M2 7q6-6 14-2v7l-7 4-7-2z', '', '#6490e8') + p('M2 7q6-6 14-2l-7 4z', '#c06868', '#ccdcf8'),
  tree: p('M2 2h6v6H2zM8 10h5v5H8z', '#888820', '#e0e838') + p('M5 8v6h3M9 7h8M13 14h4', '#444', '', 1.300),
  treepink: p('M3 3h4v5H3z', '#986070', '#f0c8d0') + p('M5 8v6M7 8h10M8 11h3v3H8zM12 14h5', '#866', '', 1.200),
  info: c(6, 11, 5, '', '#1c68b0') + p('M6 8v1M6 10v4', '#fff', '', 2) + p('M8 4q6 0 6 7M10 1q7 2 7 9', '#4c88c0', '', 1.500),
  webdoc: p('M4 3h9l3 3v11H4z', '#a8a040', '#f4f0c8') + c(9, 10, 4, '', '#3c80d0') + p('M7 8l3 1-1 4z', '', '#48a848'),
  legend: p('M1 4l4-2v12l-4 2zM5 3h11v13H5z', '#888', '#fafafa') + p('M7 6h2M7 9h2M7 12h2', '#c02020', '', 2) + p('M11 6h4M11 9h4M11 12h4', '#444', '', 1.500),
  spectrum: p('M2 1h6v4H2z', '', '#f02020') + p('M2 5h6v3H2z', '', '#f8e020') + p('M2 8h6v3H2z', '', '#40d040') + p('M2 11h6v3H2z', '', '#20c0e8') + p('M2 14h6v3H2z', '', '#2040e0') + p('M11 8l5 8', '#6858c8', '', 2.500) + p('M9 4l4 3', '#e8d850', '', 2),
  tools: p('M2 6v8l6-3zM7 9l9-4', '#334', '#6868a8', 1.500) + p('M8 7l7 9', '#5848b8', '', 3) + p('M9 3h4', '#e8d850', '', 3),
  people: c(12, 5, 3.500, '#a07830', '#e8b868') + p('M9 9h7l1 6H9z', '', '#3c9038') + c(5, 9, 3, '#806030', '#e8b070') + p('M1 12h8v5H2z', '', '#8858b0'),
  scenepic: p('M1 3h16v13H1z', '#446', '#6fa4dc') + p('M1 12h16v4H1z', '', '#345') + p('M3 11q2-5 5-1 2-3 5 1z', '', '#fff') + c(14, 6, 2, '', '#f8e838'),
  layers: p('M6 3h9v3M4 6h9v3M3 9h11v6H3z', '#666', '#ddd') + p('M6 6h8M5 12h8', '#888'),
  layersor: p('M3 4h9l4 3H7zM3 12h9l4 3H7z', '#6c8068', '#ccd8c8') + p('M5 9h9', '#d06828', '', 2.500),
  layersgr: p('M4 3h9l3 3H7zM3 8h9l3 3H6zM3 13h9l3 2H6z', '#667870', '#d0e0d8'),
  wcs: ax + p('M9 6l5-4 3 1-4 6z', '#224888', '#3c70d0'),
  wcspts: p('M4 4l10 10M4 13l9-8M9 3v12', '#a03848', '', 1.500) + p('M2 2h3v3H2zM13 5h3v3h-3zM3 13h3v3H3zM13 14h3v3h-3z', '#111', '#fff', 1),
  axes: ax,
  axesor: p('M6 3v12M2 6h12', '#b85050', '', 1.500) + p('M11 3l5 3-5 3z', '', '#e07040') + dots([[6, 3], [6, 15]]),
  wcseye: p('M2 4l7-2 4 4-3 7-4-2z', '', '#e8d440') + c(12, 9, 4, '#224', '#c8d8f8', 1.5) + c(12, 9, 1.500, '', '#113') + p('M3 14h7', R),
  playsq: p('M1 3l6 4-6 5z', '', '#28a048') + p('M7 9l5-4 5 4-5 5z', '#335890', '#a4c4ec', 1.500) + dots([[3, 13]]),
  cubesq: blue(7, 6, 4) + p('M6 12l5-3 5 4-5 3z', '#888', '#e4e4e4'),
  pointer: p('M3 3l3 4M7 2v5M2 7h5', '#999') + p('M7 4v11l3-2 2 4 2-1-2-4h4z', '#111', '#fff', 1.100),
  chain: c(6, 6, 3, '#d89870', '#f4dcc8') + p('M7 10l4-3 5 4-4 4zM4 8l6 6', '#5870a8', '#c8dcf8'),
  chainyel: c(6, 6, 3, '#c89858', '#f8e0c0') + gold(11, 12, 4),
  ruler: p('M2 9h14v6H2z', '#a08018', '#f8e060') + p('M4 9v3M7 9v3M10 9v3M13 9v3', '#775') + p('M2 2v5M16 2v5M3 5h12', '#2848a8'),
  protract: p('M3 3v12h12zM6 9v3h3z', '#b06850', '#f0c8a8') + p('M5 3l10 10', '#b8a038', '', 3.500) + p('M5 3l10 10', '#f4e080', '', 2),
  findyel: gold(11, 12, 4) + p('M1 5l4-3 6 3-2 4-5-1z', '', '#333'),
  yelarrow: gold(12, 12, 4) + p('M2 4q6-2 8 3M2 8l6 2', '#b0a030', '', 2),
  yelframe: p('M2 2h14v14H2z', '#444', '#e8e4c0', 1.500) + gold(9, 9, 4),
  assy: p('M2 4l5-2 4 2v10H2zM8 8l5-2 4 2v7l-5 2-4-2z', '#5060a0', '#ccd4f8'),
  assysave: p('M2 3h9v8H2z', '#356', '#78a0a0') + p('M8 8h9v9H8z', '#225', '#3858a0') + p('M10 8h5v4h-5z', '', '#eef'),
  graysave: c(6, 6, 4, '', '#999') + c(12, 8, 4, '', '#888') + p('M4 8h9v8H6z', '', '#909090'),
  addcomp: gold(6, 6, 4) + gold(10, 13, 4) + p('M14 2v6M11 5h6', B),
  addcomp2: gold(5, 6, 4) + gold(9, 13, 4) + p('M13 3v6M10 6h6', B),
  newcomp: gold(12, 13, 3) + p('M5 1v7M2 4h7M3 2l4 5M7 2L3 7', '#d0cc50') + p('M10 5h4v3', '#999'),
  addlong: p('M2 12l8-3 6 2-3 4-8 1z', '#b89828', '#f4e060') + p('M13 1v6M10 4h6', B),
  movecomp: gold(6, 12, 4) + gold(11, 8, 4) + p('M12 6l4-4m-3 0h3v3M3 16l-1 1', B),
  mirror: p('M2 2l6 4v4l-6 3zM16 2l-6 4v4l6 3z', '', '#202080') + p('M10 10l6 6h-6z', '', '#d02020') + p('M9 2v14M3 10v6', '#444'),
  constrain: p('M2 3l5 4-5 5z', '', '#d02020') + p('M8 12h9M12 6l4-4M12 12V6M8 16h6', '#336', '', 1.500) + p('M3 15l3-3', '#289040', '', 2),
  savecomp: p('M10 1h6v6h-6z', '#225', '#5870b8') + p('M2 8l5 3v4H2z', '', '#d02020') + p('M13 9v7', '#224', '', 2) + p('M12 8l-5 2v3l5 1z', '', '#202080'),
  clip: p('M2 6h6v7H2zM8 3l5-1v12l-5 2z', '#b06c10', '#f8e060') + p('M11 6h5v6h-5', '#e08818', '', 1.500),
  pair: gold(6, 7, 4) + p('M10 9l5-2 2 6-5 3z', '#a0b8d8', '#dce8f8') + p('M8 10v4', '#d04020', '', 2),
  hand: p('M2 15l5-4M6 11l2-4 7-4 1 6-6 3z', '#989040', '#ecec90'),
  yelplus: p('M8 3h4v5h4v4h-5v3H6v-3H2V9h6z', '#a09028', '#f0e868'),
  yelset: gold(5, 6, 4) + gold(5, 13, 4) + gold(13, 13, 4),
  links: p('M12 2h4v4h-4zM7 7h4v4H7z', '#333', '#fff') + p('M3 12h4v4H3zM11 7l2-1M6 12l2-1', '#d02818', '#fff', 1.500),
  boxlink: p('M2 5l8-3 6 3v8l-6 4-8-3z', '#888', '#f4f4e8') + gold(11, 8, 4),
  boxwin: p('M2 2h14v13H2z', '#3858b0', '#dce8fc') + p('M2 2h14v3H2z', '', '#3868d0') + gold(9, 10, 4),
  paper: p('M4 7l6-5q5 2 4 6l-6 8q-6-1-4-9zM7 9l3-4q2 0 1 3l-3 5', '#a09028', '#f0e060'),
  paperinfo: p('M3 6l4-4q3 2 2 5l-3 5q-5-1-3-6z', '#888830', '#dce0a0') + p('M9 7h7v9H9z', '#224', '#dce4fc') + p('M12.500 9v1M12.500 11v4', '#113', '', 1.600),
  tree2: p('M2 9h6M8 4v11M8 4h8M8 8h8M8 12h3', '#555') + p('M11 9h6v8h-6z', '#202880', '#c8d0f8') + p('M12 13h4', '#202880', '', 2),
  update: p('M5 3l8-1v6l-7 2zM4 10h9v4H4z', '#b08820', '#f4d058') + p('M3 3h8', '#e05030', '', 2) + p('M9 12l3 4 4-7', '#30a038', '', 2.200),
  graysel: p('M2 6l5-3v12l-5-2zM8 5h4v9H8zM13 4l3 2v7l-3-3z', '#888', '#a8a8a8'),
  snap: p('M2 2h14v14H2z', '#a05040', '#e8d8d0') + p('M8 3v10M3 8h10', '#843c38') + p('M8 8h9l-4 4v4l-2-2v-3z', '', '#f0a828'),
  grayback: p('M2 10l5-4v3h6V6h3v6H7v3z', '', '#999'),
  eraser: p('M2 10l6-5 8 4-6 6-7-2z', '#555', '#fcfcfc') + p('M7 9l4-2', '#d04040', '', 2) + p('M10 15v-3l6-3M10 12l-8-2', '#555'),
  grayundo: p('M3 8q0-5 5-4t4 8M9 12h7M12 9v7', '#999', '', 1.700) + p('M1 7h6l-3 4z', '', '#999'),
  grayredo: p('M2 5q8-5 11 3v4', '#999', '', 4) + p('M9 10h8l-3 6z', '', '#999'),
  marquee: `<path d="M3 4h13v11H3z" fill="none" stroke="#333" stroke-width="1.300" stroke-dasharray="2 1.500"/>` + dots([[3, 3], [15, 15]]),
  glasscube: cube(9, 9, 8, '#c8ecfc', '#58a8ec', '#2060c0') + p('M9 2v6', '#d05050'),
  fullscreen: p('M2 5V2h3M13 2h3v3M16 13v3h-3M5 16H2v-3', '#445', '', 1.400) + p('M4 4h10v9H4z', '#334', '#f4f4f4') + p('M6 6h6v5H6z', '', '#4c80b8'),
  windows: p('M2 4q3-2 6 0L7 9Q4 7 1 9z', '', '#f06030') + p('M9 4q4 2 7 0l-1 5q-4 2-7 0z', '', '#80c838') + p('M1 10q3-2 6 0l-1 5q-3-2-6 0z', '', '#4898f0') + p('M8 10q4 2 7 0l-1 5q-4 2-7 0z', '', '#f8d030'),
  ie: p('M15 12Q12 16 8 15 4 14 4 9.500T9 4q6 0 6 6H5', '#60c0f8', '', 2.600) + p('M1 15Q2 7 14 3l2 0', '#b8e4fc', '', 1),
  edit: p('M3 3h12v12H3z', '#2058a8', '#dcecfc') + c(8, 9, 3.500, '#58a8e8', '', 2) + p('M8 11l7-8', '#90a8c8', '', 2),
  smiley: p('M2 2h14v12H2z', '#a07010', '#f8d028', 1.500) + p('M6 6v2M12 6v2', '#222', '', 2) + p('M5 10q4 4 8 0', '#222', '#fff') + p('M8 14l7 3M12 16v1', '#e08020', '', 2),
  folder: p('M1 4h6l2 2h8v10H1z', '#a08020', '#f0cc48') + p('M2 8h15v7H2z', '', '#fceea0'),
  keyboard: p('M2 7h14v8H2z', '#222', '#e8e8e8') + p('M3 9h12M3 11h12M5 13h8', '#222', '', 1.100) + p('M9 7V5l3-2', '#222'),
  wavebox: p('M2 3h15v12H2z', '', '#38b838') + p('M3 13L6 3l2 11 3-12 2 12 3-9', '#202080', '', 2.200) + p('M2 9l5 3 4-6', '#d02040', '', 1.200)
};

function draw(name) {
  return `<svg width="18" height="18" viewBox="0 0 18 18" aria-hidden="true">${icons[name]}</svg>`;
}
function tool(name) {
  let pressed = name.endsWith('!');
  name = name.replace('!', '');
  return `<button class="tool${pressed ? ' pressed' : ''}" aria-label="${name}">${draw(name)}</button>`;
}
// "|" separator, "v" menu arrow, "ov" toolbar options, "/" start of the next toolbar
function build(token) {
  if (token === '|') return '<i class="sep"></i>';
  if (token === 'v') return '<i class="arrow"></i>';
  if (token === 'ov') return '<i class="arrow low"></i>';
  if (token === '/') return '<i class="break"><i class="grip"></i></i>';
  if (token.endsWith('+v')) return `<div class="pair">${tool(token.slice(0, -2))}<i class="arrow"></i></div>`;
  return tool(token);
}
document.querySelectorAll('[data-tools]').forEach(el => {
  el.innerHTML = el.dataset.tools.split(' ').map(build).join('');
});
document.querySelectorAll('[data-icon]').forEach(el => {
  el.innerHTML = draw(el.dataset.icon);
});
```
